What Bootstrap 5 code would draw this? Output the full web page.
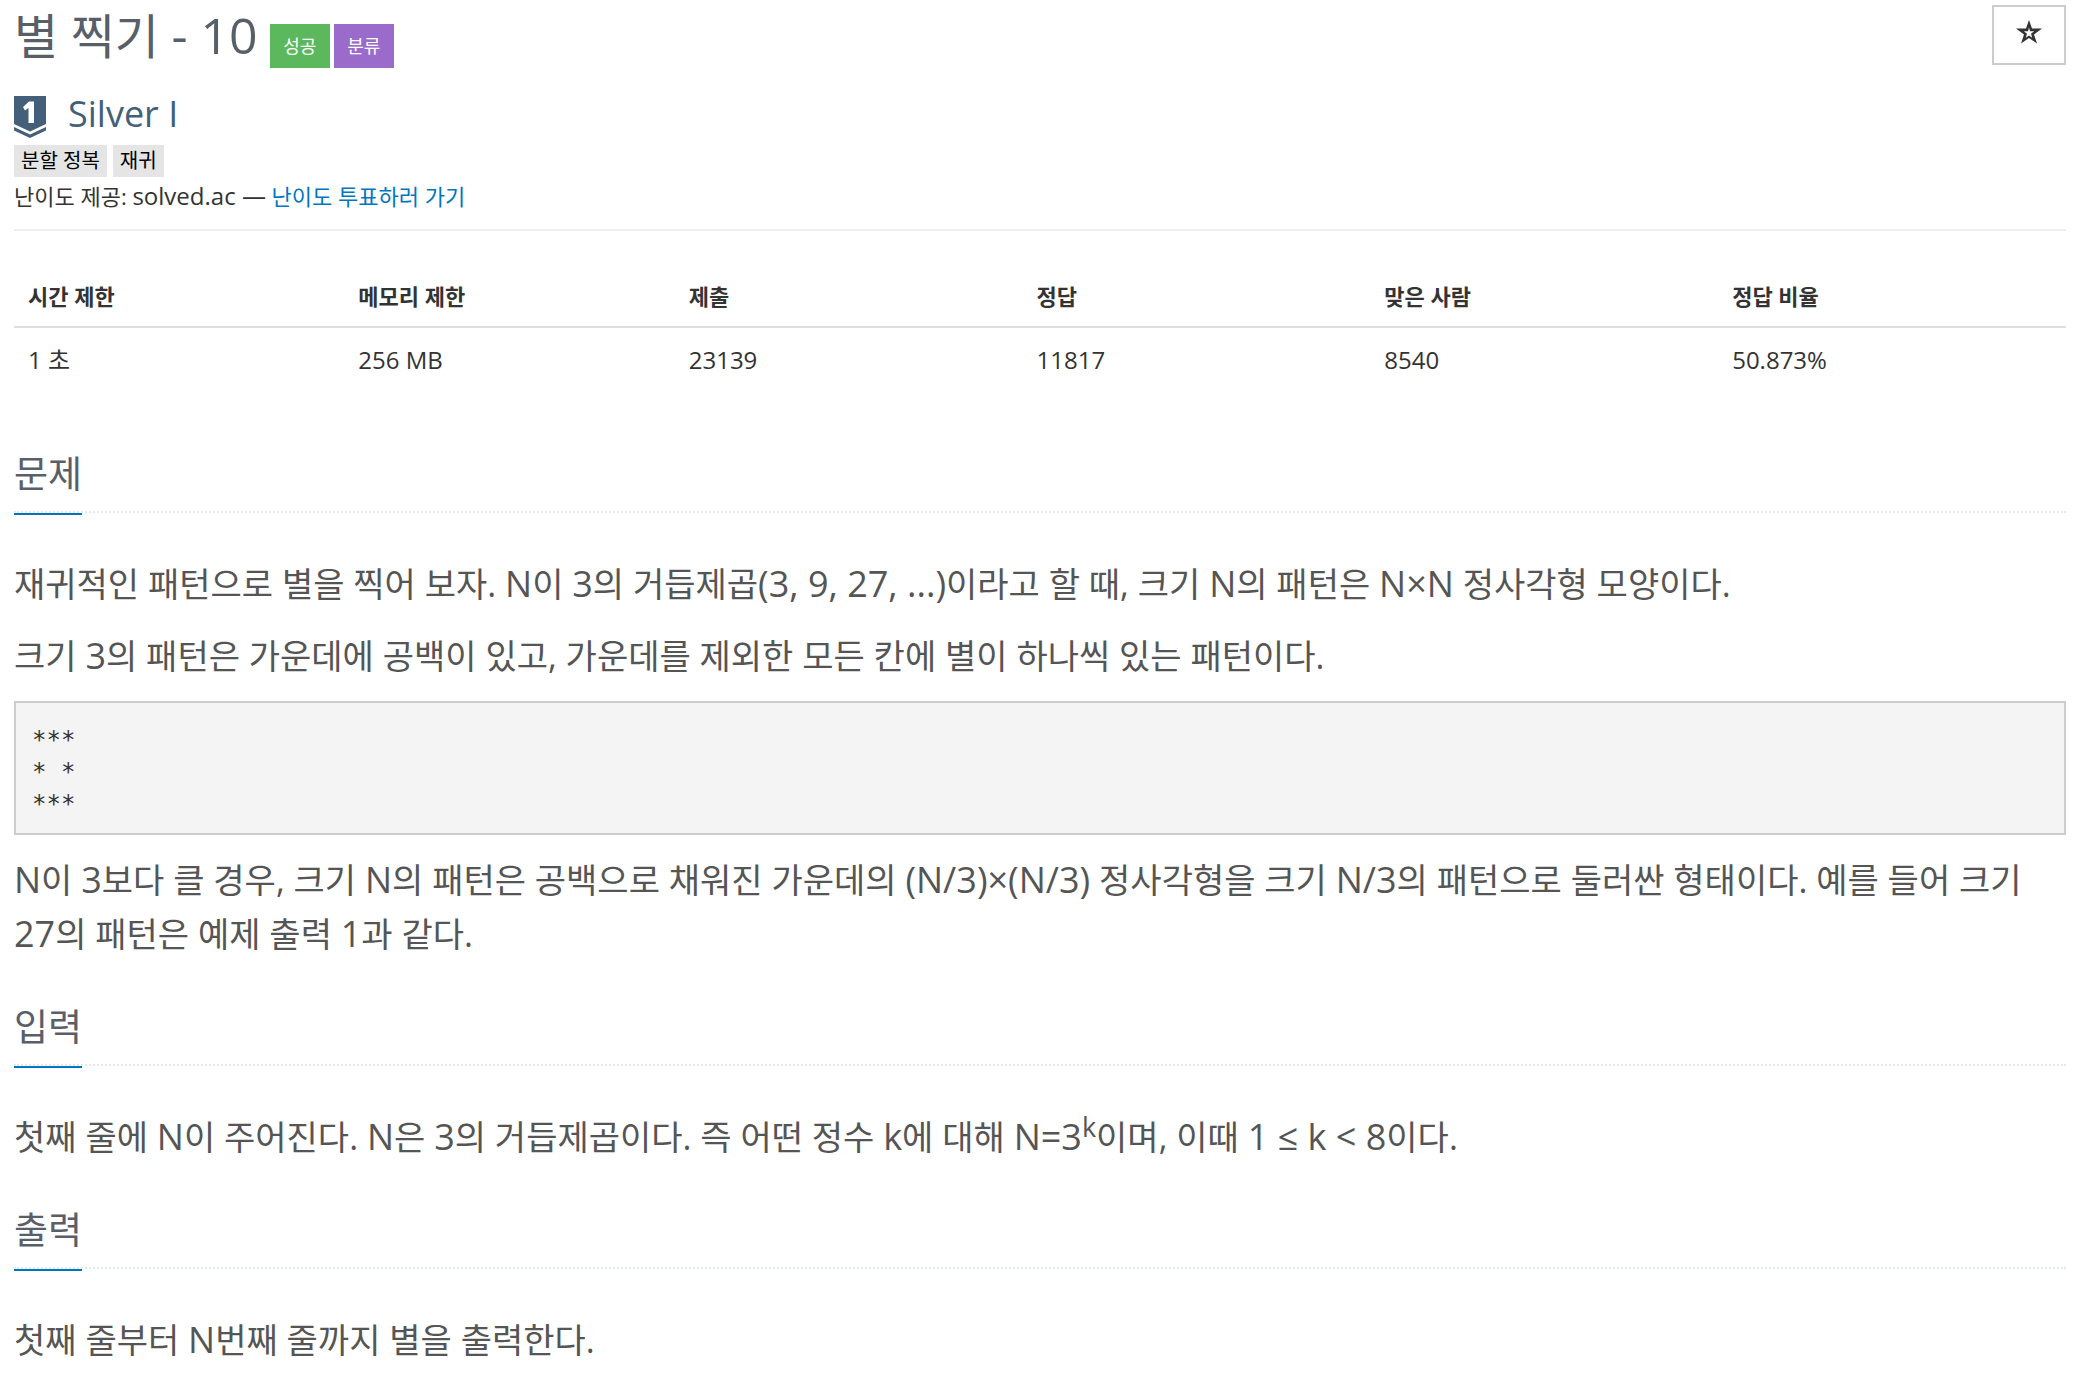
<!DOCTYPE html>
<html lang="ko">
<head>
<meta charset="utf-8">
<meta name="viewport" content="width=device-width, initial-scale=1">
<title>별 찍기 - 10</title>
<link href="https://cdn.jsdelivr.net/npm/bootstrap@5.3.0/dist/css/bootstrap.min.css" rel="stylesheet">
<style>
  body { font-family: "Open Sans", "Noto Sans CJK KR", sans-serif; font-size: 22px; line-height: 34px; color: #333; background: #fff; }
  .page { padding: 4px 16px 12px 14px; }
  a { color: #0076c0; text-decoration: none; }
  .title { font-size: 48px; line-height: 64px; color: #585f69; }
  .title .en { font-size: 50px; }
  .en { font-size: 24px; line-height: 1; }
  .tagbtn { font-size: 18px; line-height: 44px; padding: 0; min-width: 60px; color: #fff; border: 0; border-radius: 0; }
  .tagbtn:hover { color: #fff; }
  .ok { background: #5cb85c; }
  .kind { background: #9b6bcc; }
  .tags { gap: 4px; margin-left: 12px; }
  .star { width: 74px; height: 60px; border: 2px solid #ccc; border-radius: 0; margin-top: 1px; padding: 0 0 6px; }
  .tier { font-size: 36px; line-height: 48px; color: #435f7a; gap: 22px; margin-top: 22px; }
  .topics { gap: 6px; margin-top: 7px; }
  .topic { font-size: 20px; line-height: 32px; padding: 0 7px; background: #e5e5e5; color: #000; }
  .source { margin-top: 2px; }
  .rule { border-top: 2px solid #eee; opacity: 1; margin: 16px 0 35px; }
  .info { --bs-table-color: #333; --bs-table-bg: transparent; table-layout: fixed; color: #333; margin-bottom: 52px; }
  .info th, .info td { padding: 14px; border: 0; }
  .info .limit { width: 16.1%; }
  .info thead th { font-size: 22px; line-height: 32px; border-bottom: 2px solid #ddd; }
  .info td { font-size: 24px; line-height: 36px; }
  .headline { border-bottom: 2px dotted #e4e9f0; margin: 0 0 44px; }
  .headline h2 { font-size: 37px; line-height: 60px; color: #585f69; margin: 0 0 -4px; padding-bottom: 9px; border-bottom: 2px solid #0076c0; }
  .prose { font-size: 34px; line-height: 54px; color: #555; margin-bottom: 36px; word-break: keep-all; }
  .prose .en { font-size: 36px; }
  .prose p { margin: 0 0 18px; }
  .prose p:last-child { margin: 0; }
  .prose pre { font: 24px/32px "DejaVu Sans Mono", monospace; color: #333; background: #f4f4f4; border: 2px solid #ccc; padding: 21px 16px 13px; margin: 0 0 18px; }
</style>
</head>
<body>
<main class="page">
  <header class="d-flex justify-content-between align-items-start">
    <div class="d-flex align-items-end">
      <h1 class="title fw-normal mb-0">별 찍기 <span class="en">- 10</span></h1>
      <div class="tags d-flex">
        <button type="button" class="btn tagbtn ok">성공</button>
        <button type="button" class="btn tagbtn kind">분류</button>
      </div>
    </div>
    <button type="button" class="btn star d-flex align-items-center justify-content-center" aria-label="즐겨찾기">
      <svg width="26" height="24" viewBox="0 0 26 24"><path fill="#333" fill-rule="evenodd" d="M13 0 16 8.500H26L18 14.500 21 23.500 13 18 5 23.500 8 14.500 0 8.500H10ZM13 7.500 12 11.200H7.800L11 13.800 9.800 17.800 13 15.500 16.200 17.800 15 13.800 18.200 11.200H14Z"/></svg>
    </button>
  </header>

  <div class="tier d-flex align-items-end">
    <svg width="32" height="42" viewBox="0 0 32 42"><path fill="#435f7a" d="M0 0H32V28L16 35.500 0 28ZM0 31 16 38.500 32 31V34.500L16 42 0 34.500Z"/><path fill="#fff" d="M15 5.500H20V27H14.500V12L11 14.500 9 11Z"/></svg>
    <span>Silver I</span>
  </div>
  <div class="topics d-flex">
    <a href="#" class="topic">분할 정복</a>
    <a href="#" class="topic">재귀</a>
  </div>
  <div class="source">난이도 제공: <span class="en">solved.ac —</span> <a href="#">난이도 투표하러 가기</a></div>
  <hr class="rule">

  <table class="table info">
    <thead><tr><th scope="col" class="limit">시간 제한</th><th scope="col" class="limit">메모리 제한</th><th scope="col">제출</th><th scope="col">정답</th><th scope="col">맞은 사람</th><th scope="col">정답 비율</th></tr></thead>
    <tbody><tr><td>1 초</td><td>256 MB</td><td>23139</td><td>11817</td><td>8540</td><td>50.873%</td></tr></tbody>
  </table>

  <section>
    <div class="headline d-flex"><h2 class="fw-normal">문제</h2></div>
    <div class="prose">
      <p>재귀적인 패턴으로 별을 찍어 보자. <span class="en">N</span>이 <span class="en">3</span>의 거듭제곱<span class="en">(3, 9, 27, ...)</span>이라고 할 때, 크기 <span class="en">N</span>의 패턴은 <span class="en">N×N</span> 정사각형 모양이다.</p>
      <p>크기 <span class="en">3</span>의 패턴은 가운데에 공백이 있고, 가운데를 제외한 모든 칸에 별이 하나씩 있는 패턴이다.</p>
<pre>***
* *
***</pre>
      <p><span class="en">N</span>이 <span class="en">3</span>보다 클 경우, 크기 <span class="en">N</span>의 패턴은 공백으로 채워진 가운데의 <span class="en">(N/3)×(N/3)</span> 정사각형을 크기 <span class="en">N/3</span>의 패턴으로 둘러싼 형태이다. 예를 들어 크기 <span class="en">27</span>의 패턴은 예제 출력 <span class="en">1</span>과 같다.</p>
    </div>
  </section>
  <section>
    <div class="headline d-flex"><h2 class="fw-normal">입력</h2></div>
    <div class="prose">
      <p>첫째 줄에 <span class="en">N</span>이 주어진다. <span class="en">N</span>은 <span class="en">3</span>의 거듭제곱이다. 즉 어떤 정수 <span class="en">k</span>에 대해 <span class="en">N=3<sup>k</sup></span>이며, 이때 <span class="en">1 ≤ k &lt; 8</span>이다.</p>
    </div>
  </section>
  <section>
    <div class="headline d-flex"><h2 class="fw-normal">출력</h2></div>
    <div class="prose mb-0">
      <p>첫째 줄부터 <span class="en">N</span>번째 줄까지 별을 출력한다.</p>
    </div>
  </section>
</main>
<script src="https://cdn.jsdelivr.net/npm/bootstrap@5.3.0/dist/js/bootstrap.bundle.min.js"></script>
</body>
</html>
